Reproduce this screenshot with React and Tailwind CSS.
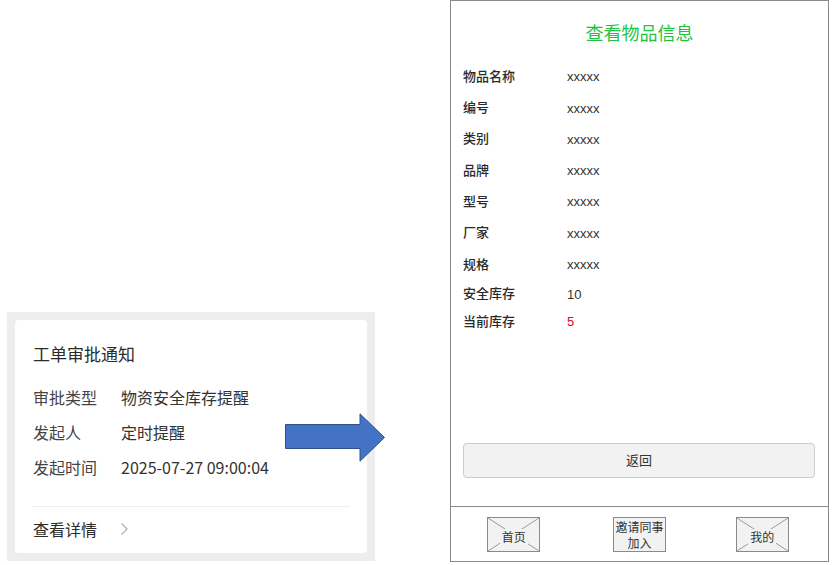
import React from "react";

const cjk = { fontFamily: '"Noto Sans CJK SC", "Noto Sans", sans-serif' };
const latin = { fontFamily: '"Liberation Sans", "Noto Sans CJK SC", sans-serif' };

function NavImg({ label }) {
  return (
    <div className="relative w-[53px] h-[35px] border border-[#8a8a8a] bg-[#f2f2f2] flex items-center justify-center">
      <svg className="absolute inset-0" width="51" height="33" viewBox="0 0 51 33">
        <line x1="0" y1="0" x2="51" y2="33" stroke="#999" strokeWidth="1" />
        <line x1="51" y1="0" x2="0" y2="33" stroke="#999" strokeWidth="1" />
      </svg>
      <span className="relative bg-[#f2f2f2] px-[2px] text-[12px] leading-[16px] text-[#333] mt-[4px]">{label}</span>
    </div>
  );
}

const rows = [
  ["物品名称", "xxxxx", "h-[31.3px]"],
  ["编号", "xxxxx", "h-[31.3px]"],
  ["类别", "xxxxx", "h-[31.3px]"],
  ["品牌", "xxxxx", "h-[31.3px]"],
  ["型号", "xxxxx", "h-[31.3px]"],
  ["厂家", "xxxxx", "h-[31.3px]"],
  ["规格", "xxxxx", "h-[31.3px]"],
  ["安全库存", "10", "h-[28px]"],
  ["当前库存", "5", "h-[27px]"],
];

export default function App() {
  return (
    <div className="relative w-[835px] h-[565px] bg-white flex overflow-hidden" style={cjk}>
      {/* Left column */}
      <div className="w-[450px] pt-[312px] pl-[7px]">
        <div className="w-[368px] h-[249px] bg-[#ededed] p-[8px]">
          <div className="h-full bg-white rounded-[4px] pl-[18px] pt-[22px] flex flex-col">
            <div className="h-[24px] leading-[24px] text-[17px] text-[#2b2b2b]">工单审批通知</div>
            <div className="mt-[13px] flex flex-col text-[16px] text-[#333]">
              <div className="h-[35px] flex items-center">
                <span className="w-[88px] text-[#444]">审批类型</span>
                <span>物资安全库存提醒</span>
              </div>
              <div className="h-[35px] flex items-center">
                <span className="w-[88px] text-[#444]">发起人</span>
                <span>定时提醒</span>
              </div>
              <div className="h-[35px] flex items-center">
                <span className="w-[88px] text-[#444]">发起时间</span>
                <span>2025-07-27 09:00:04</span>
              </div>
            </div>
            <div className="mt-[22px] mr-[17px] h-px bg-[#eeeeee]" />
            <div className="h-[44px] flex items-center text-[16px] text-[#2b2b2b]">
              <span>查看详情</span>
              <svg className="ml-[23px]" width="9" height="14" viewBox="0 0 9 14">
                <polyline points="1.5,1.5 7,7 1.5,12.5" fill="none" stroke="#b0b0b0" strokeWidth="1.2" />
              </svg>
            </div>
          </div>
        </div>
      </div>

      {/* Right phone panel */}
      <div className="w-[379px] h-[562px] border border-[#8a8a8a] flex flex-col">
        <div className="flex-1 flex flex-col">
          <div className="pt-[18px] h-[45px] text-center text-[18px] leading-[26px] text-[#1dc33f]">查看物品信息</div>
          <div className="mt-[15.4px] pl-[12px] flex flex-col">
            {rows.map(([k, v, h]) => (
              <div key={k} className={`${h} flex items-center`}>
                <span className="w-[104px] mb-[3px] text-[13px] font-medium text-[#2a2a2a]">{k}</span>
                <span
                  className={`text-[13px] ${v === "5" ? "text-[#e8001c]" : "text-[#333]"}`}
                  style={latin}
                >
                  {v}
                </span>
              </div>
            ))}
          </div>
          <div className="mt-auto mb-[28px] ml-[12px] w-[352px] h-[35px] rounded-[4px] border border-[#cccccc] bg-[#f2f2f2] flex items-center justify-center text-[13px] text-[#333]">
            <span className="mb-[2px]">返回</span>
          </div>
        </div>
        <div className="h-[55px] border-t border-[#8a8a8a] grid grid-cols-3 items-start pt-[10px]">
          <div className="flex justify-center"><NavImg label="首页" /></div>
          <div className="flex justify-center">
            <div className="w-[53px] h-[35px] border border-[#8a8a8a] bg-[#f2f2f2] flex flex-col items-center justify-center text-[12px] leading-[16px] text-[#333]">
              <span>邀请同事</span>
              <span>加入</span>
            </div>
          </div>
          <div className="flex justify-center pr-[6px]"><NavImg label="我的" /></div>
        </div>
      </div>

      {/* Arrow overlay */}
      <svg className="absolute left-[285px] top-[413px]" width="101" height="50" viewBox="0 0 101 50">
        <polygon
          points="0.5,11.5 75,11.5 75,0.8 99.5,24.5 75,48.2 75,35.5 0.5,35.5"
          fill="#4472c4"
          stroke="#2f528f"
          strokeWidth="1"
        />
      </svg>
    </div>
  );
}
